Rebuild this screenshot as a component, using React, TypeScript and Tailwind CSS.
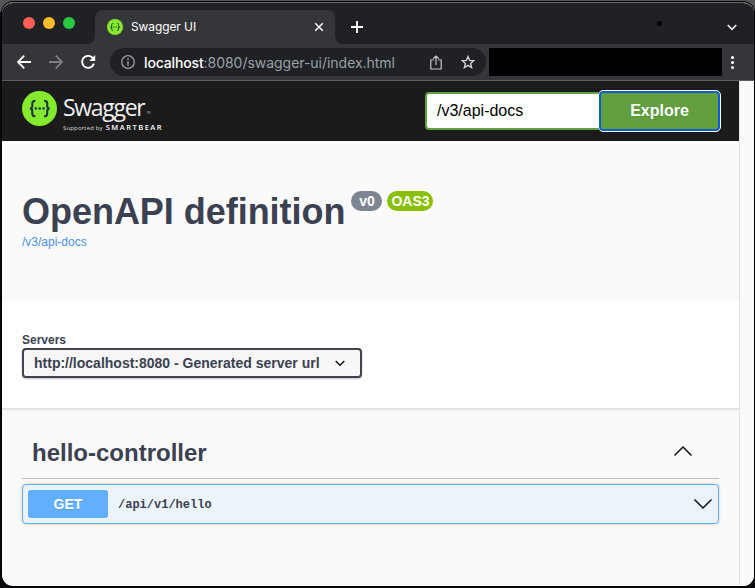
import React from "react";

function SwaggerMark({ size }: { size: number }) {
  return (
    <svg width={size} height={size} viewBox="0 0 34 34" className="block shrink-0">
      <circle cx="17" cy="17" r="17" fill="#85ea2d" />
      <g fill="none" stroke="#173647" strokeWidth="2">
        <path d="M13 9.500c-2.400 0-3 .7-3 2.500v2.500c0 1.700-.6 2.500-2.400 2.500 1.800 0 2.400.8 2.400 2.500V22c0 1.800.6 2.500 3 2.500" />
        <path d="M21.500 9.500c2.400 0 3 .7 3 2.500v2.500c0 1.700.6 2.500 2.400 2.500-1.800 0-2.400.8-2.400 2.500V22c0 1.800-.6 2.500-3 2.500" />
      </g>
      <g fill="#173647">
        <circle cx="13.400" cy="17" r="1.200" />
        <circle cx="17.200" cy="17" r="1.200" />
        <circle cx="21" cy="17" r="1.200" />
      </g>
    </svg>
  );
}

function TabStrip() {
  return (
    <div className="flex h-[41px] items-start bg-[#202124]">
      <div className="ml-[21px] mt-[14px] flex gap-2">
        <span className="size-3 rounded-full bg-[#ff5f57]" />
        <span className="size-3 rounded-full bg-[#febc2e]" />
        <span className="size-3 rounded-full bg-[#28c840]" />
      </div>
      <svg width="8" height="8" className="ml-[12px] mt-[33px] shrink-0">
        <path d="M8 0A8 8 0 0 1 0 8h8z" fill="#35363a" />
      </svg>
      <div className="mt-[7px] flex h-[34px] w-[240px] shrink-0 items-center rounded-t-lg bg-[#35363a] pl-3 pr-[11px]">
        <SwaggerMark size={16} />
        <span className="ml-[8px] whitespace-nowrap font-[Inter,sans-serif] text-[12px] tracking-[-0.100px] text-white">Swagger UI</span>
        <svg width="10" height="10" viewBox="0 0 10 10" className="ml-auto" stroke="#fff" strokeWidth="1.500">
          <path d="M1.200 1.200l7.600 7.600M8.800 1.200L1.200 8.800" />
        </svg>
      </div>
      <svg width="8" height="8" className="mt-[33px] shrink-0">
        <path d="M0 0a8 8 0 0 0 8 8H0z" fill="#35363a" />
      </svg>
      <svg width="12" height="12" viewBox="0 0 12 12" className="ml-[8px] mt-[18px]" stroke="#fff" strokeWidth="1.800">
        <path d="M6 0v12M0 6h12" />
      </svg>
      <span className="ml-[294px] mt-[18px] size-[5px] rounded-full bg-black" />
      <svg width="10" height="7" viewBox="0 0 10 7" className="ml-[65px] mt-[21px]" fill="none" stroke="#e8eaed" strokeWidth="1.700">
        <path d="M.7 1L5 5.400 9.300 1" />
      </svg>
    </div>
  );
}

function Toolbar() {
  return (
    <div className="flex h-[37px] items-center border-b border-[#5e5f63] bg-[#35363a]">
      <svg width="14" height="14" viewBox="0 0 14 14" className="ml-[15px]" fill="none" stroke="#fff" strokeWidth="1.800">
        <path d="M14 7H1.300M7.200 .7L.9 7l6.300 6.300" />
      </svg>
      <svg width="14" height="14" viewBox="0 0 14 14" className="ml-[18px]" fill="none" stroke="#7e8084" strokeWidth="1.800">
        <path d="M0 7h12.700M6.800 .7L13.100 7l-6.300 6.300" />
      </svg>
      <svg width="15" height="14" viewBox="0 0 15 14" className="ml-[18px]" fill="none" stroke="#fff" strokeWidth="1.900">
        <path d="M12.200 3.600A6 6 0 1 0 12.900 8.600" />
        <path d="M14.200 0v6H8.300z" fill="#fff" stroke="none" />
      </svg>
      <div className="ml-[14px] flex h-7 w-[376px] shrink-0 items-center rounded-full bg-[#202124] pl-[11px] pr-[11px]">
        <svg width="14" height="14" viewBox="0 0 14 14" fill="none" stroke="#9aa0a6" strokeWidth="1.300">
          <circle cx="7" cy="7" r="6.300" />
          <path d="M7 6.200v4.300M7 3.500v1.500" strokeWidth="1.500" />
        </svg>
        <span className="ml-[9px] whitespace-nowrap font-[Inter,sans-serif] text-[14px] tracking-[-0.030px] text-[#9aa0a6]">
          <span className="font-medium tracking-[-0.150px] text-white">localhost</span>:8080/swagger-ui/index.html
        </span>
        <svg width="12" height="15" viewBox="0 0 12 15" className="ml-auto" fill="none" stroke="#c4c7cb" strokeWidth="1.200">
          <path d="M3.800 5H.8v9h10.400V5h-3M6 10V1.200M3.200 3.700L6 1l2.800 2.700" />
        </svg>
        <svg width="14" height="14" viewBox="0 0 14 14" className="ml-[19px]" fill="none" stroke="#d0d2d5" strokeWidth="1.400">
          <path d="M7 1.500l1.600 3.900 4.200.3-3.200 2.700 1 4.100L7 10.300l-3.600 2.200 1-4.100L1.200 5.700l4.200-.3z" />
        </svg>
      </div>
      <div className="ml-[3px] h-7 w-[233px] shrink-0 bg-black" />
      <div className="ml-[9px] flex flex-col gap-[2px]">
        <span className="size-[3px] rounded-full bg-white" />
        <span className="size-[3px] rounded-full bg-white" />
        <span className="size-[3px] rounded-full bg-white" />
      </div>
    </div>
  );
}

function Topbar() {
  return (
    <header className="flex h-[60px] items-start bg-[#1b1b1b] pl-5">
      <div className="mt-[10px]">
        <SwaggerMark size={35} />
      </div>
      <div className="ml-[6px] mt-[11px] w-[110px] whitespace-nowrap font-['Open_Sans',sans-serif] text-white">
        <div className="flex items-end leading-[30px]">
          <span className="text-[23px] tracking-[-1.300px] text-[#f0f0f0]">Swagger</span>
          <span className="ml-[2px] text-[3px] leading-[17px] text-[#aaa]">TM</span>
        </div>
        <div className="flex items-baseline leading-[10px]">
          <span className="text-[6px] tracking-[0.160px] text-[#ddd]">Supported by</span>
          <span className="ml-[3px] text-[7.500px] font-semibold tracking-[1.500px]">SMARTBEAR</span>
        </div>
      </div>
      <div className="ml-auto mr-[18px] mt-[9px] flex items-center">
        <div className="flex h-[38px] w-[173px] items-center rounded-l border-2 border-r-0 border-[#62a03f] bg-white pl-[10px] text-[16px] text-black">/v3/api-docs</div>
        <button className="flex h-[42px] w-[123px] items-center justify-center rounded-[5px] border border-white bg-[#0b5fcc] p-[2px]">
          <span className="flex size-full items-center justify-center rounded-[2px] bg-[#62a03f] text-[16px] font-bold text-white [text-shadow:0_1px_2px_rgba(0,0,0,0.1)]">Explore</span>
        </button>
      </div>
    </header>
  );
}

function ApiInfo() {
  return (
    <section className="h-[159px] pl-5 pt-[50px]">
      <div className="flex items-start">
        <h2 className="whitespace-nowrap text-[36px] font-bold leading-[42px] tracking-[-0.030px]">OpenAPI definition</h2>
        <span className="ml-[6px] flex h-5 w-[31px] items-center justify-center rounded-full bg-[#7d8492] text-[14px] font-bold text-white">v0</span>
        <span className="ml-[5px] flex h-5 w-[46px] items-center justify-center rounded-full bg-[#89bf04] text-[14px] font-bold text-white">OAS3</span>
      </div>
      <a className="mt-[2px] block text-[12px] leading-[14px] text-[#4990e2]">/v3/api-docs</a>
    </section>
  );
}

function Servers() {
  return (
    <section className="h-[109px] border-b border-[#e0e0e0] bg-white pl-5 pt-[33px] shadow-[0_1px_2px_rgba(0,0,0,0.1)]">
      <div className="text-[12px] font-bold leading-[15px]">Servers</div>
      <div className="flex h-[30px] w-[340px] items-center rounded border-2 border-[#41444e] bg-[#f7f7f7] pl-[10px] shadow-[0_1px_2px_rgba(0,0,0,0.25)]">
        <span className="whitespace-nowrap text-[14px] font-bold">http://localhost:8080 - Generated server url</span>
        <svg width="10" height="7" viewBox="0 0 10 7" className="ml-auto mr-[15px]" fill="none" stroke="#111" strokeWidth="1.500">
          <path d="M.7 1L5 5.300 9.300 1" />
        </svg>
      </div>
    </section>
  );
}

function Operations() {
  return (
    <section className="pl-5 pr-5 pt-[24px]">
      <div className="flex h-[46px] items-center justify-between border-b border-[#bfc0c4] pb-[6px] pl-[10px] pr-[26px]">
        <h3 className="text-[24px] font-bold leading-[38px]">hello-controller</h3>
        <svg width="20" height="12" viewBox="0 0 20 12" className="mb-[3px]" fill="none" stroke="#111" strokeWidth="1.500">
          <path d="M1.500 10.500L10 2l8.500 8.500" />
        </svg>
      </div>
      <div className="mt-[5px] flex h-10 items-center rounded border border-[#61affe] bg-[#ebf3fb] pl-[5px] pr-[5px] shadow-[0_0_3px_rgba(0,0,0,0.19)]">
        <span className="flex h-7 w-20 items-center justify-center rounded-[3px] bg-[#61affe] text-[14px] font-bold text-white [text-shadow:0_1px_0_rgba(0,0,0,0.1)]">GET</span>
        <span className="ml-[10px] pt-[2px] font-['Liberation_Mono',monospace] text-[12px] font-bold">/api/v1/hello</span>
        <svg width="20" height="12" viewBox="0 0 20 12" className="ml-auto" fill="none" stroke="#111" strokeWidth="1.500">
          <path d="M1.500 1.500L10 10l8.500-8.500" />
        </svg>
      </div>
    </section>
  );
}

export default function App() {
  return (
    <div className="h-[588px] w-[755px] overflow-hidden bg-[linear-gradient(#555_0,#555_12px,#08080c_12px)] pl-[2px] pt-[2px] font-['Liberation_Sans',Arial,sans-serif] text-[#3b4151]">
      <div className="flex h-[584px] w-[752px] flex-col overflow-hidden rounded-[11px] border-t border-[#68696b] bg-[#fafafa] shadow-[0_0_0_1px_#000]">
        <TabStrip />
        <Toolbar />
        <div className="flex min-h-0 flex-1">
          <main className="w-[737px]">
            <Topbar />
            <ApiInfo />
            <Servers />
            <Operations />
          </main>
          <div className="flex-1 border-l border-[#e4e4e4] bg-[#fafafa]" />
        </div>
      </div>
    </div>
  );
}
